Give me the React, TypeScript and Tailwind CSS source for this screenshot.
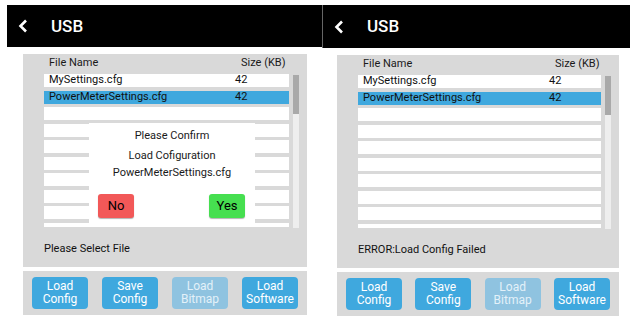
import React from 'react'

type ScreenProps = {
  width: string
  panelMargin: string
  status: string
  dialog?: boolean
  headerEdge?: string
}

const files = [
  { name: 'MySettings.cfg', size: '42' },
  { name: 'PowerMeterSettings.cfg', size: '42', selected: true },
]

function Chevron() {
  return (
    <svg width="10" height="14" viewBox="0 0 10 14" className="shrink-0">
      <polyline points="8,1.5 2.5,7 8,12.5" fill="none" stroke="white" strokeWidth="2.6" strokeLinejoin="miter" />
    </svg>
  )
}

function Screen({ width, panelMargin, status, dialog, headerEdge = '' }: ScreenProps) {
  const rows = [...files, ...Array.from({ length: 8 }, () => ({ name: '', size: '', selected: false }))]
  const buttons = [
    { top: 'Load', bottom: 'Config', off: false },
    { top: 'Save', bottom: 'Config', off: false },
    { top: 'Load', bottom: 'Bitmap', off: true },
    { top: 'Load', bottom: 'Software', off: false },
  ]
  return (
    <div className={`${width} flex flex-col shrink-0`}>
      <div className={`h-[42px] bg-black flex items-center pl-[11px] ${headerEdge}`}>
        <Chevron />
        <span className="ml-[23px] text-white text-[17px] font-medium leading-none">USB</span>
      </div>

      <div className={`${panelMargin} mt-[7px] h-[213px] bg-[#d9d9d9] pl-[21px] pr-[8px] flex flex-col`}>
        <div className="h-[19px] flex items-center pl-[5px] text-[11px] text-[#1a1a1a]">
          <span className="w-[192px]">File Name</span>
          <span>Size (KB)</span>
        </div>
        <div className="flex mt-[1px]">
          <div className="flex-1 h-[153px] overflow-hidden relative">
            <div className="flex flex-col gap-[3.5px]">
              {rows.map((r, i) => (
                <div
                  key={i}
                  className={`h-[13px] shrink-0 flex items-center pl-[5px] text-[11px] text-[#111] ${r.selected ? 'bg-[#3fa8de]' : 'bg-white'}`}
                >
                  <span className="w-[186px]">{r.name}</span>
                  <span>{r.size}</span>
                </div>
              ))}
            </div>
            {dialog && (
              <div className="absolute left-[45px] top-[49px] w-[166px] bottom-0 bg-white flex flex-col items-center text-[11px] text-[#1a1a1a]">
                <div className="mt-[6px] leading-[14px]">Please Confirm</div>
                <div className="mt-[6px] leading-[14px]">Load Cofiguration</div>
                <div className="mt-[3px] leading-[14px]">PowerMeterSettings.cfg</div>
                <div className="mt-[14px] w-full flex justify-between pl-[9px] pr-[10px]">
                  <div className="w-[36px] h-[24px] rounded-[3px] bg-[#f25858] shadow-[0_1px_1px_rgba(0,0,0,0.3)] flex items-center justify-center text-[13px] text-black">
                    No
                  </div>
                  <div className="w-[36px] h-[24px] rounded-[3px] bg-[#46df50] shadow-[0_1px_1px_rgba(0,0,0,0.3)] flex items-center justify-center text-[13px] text-black">
                    Yes
                  </div>
                </div>
              </div>
            )}
          </div>
          <div className="ml-[4px] w-[6px] h-[153px] mt-[1px] bg-[#eeeeee]">
            <div className="h-[39px] bg-[#a9a9a9]" />
          </div>
        </div>
        <div className="mt-[14px] h-[14px] leading-[14px] text-[11px] text-[#111]">{status}</div>
      </div>

      <div className={`${panelMargin} mt-[4px] h-[44px] bg-[#d9d9d9] flex items-center justify-between px-[9px]`}>
        {buttons.map((b, i) => (
          <div
            key={i}
            className={`w-[56px] h-[32px] rounded-[4px] flex flex-col items-center justify-center text-[12px] leading-[13px] ${b.off ? 'bg-[#8fc3e0] text-[#e3f1f9]' : 'bg-[#3fa8de] text-white'}`}
          >
            <span>{b.top}</span>
            <span>{b.bottom}</span>
          </div>
        ))}
      </div>
    </div>
  )
}

export default function App() {
  return (
    <div className="w-[630px] h-[323px] bg-white overflow-hidden flex pt-[5px] pl-[7px] font-['Roboto',sans-serif]">
      <Screen width="w-[315px]" panelMargin="ml-[16px] mr-[15px]" status="Please Select File" dialog />
      <Screen
        width="w-[308px]"
        panelMargin="ml-[15px] mr-[11px]"
        status="ERROR:Load Config Failed"
        headerEdge="border-l border-[#666] h-[43px]"
      />
    </div>
  )
}
